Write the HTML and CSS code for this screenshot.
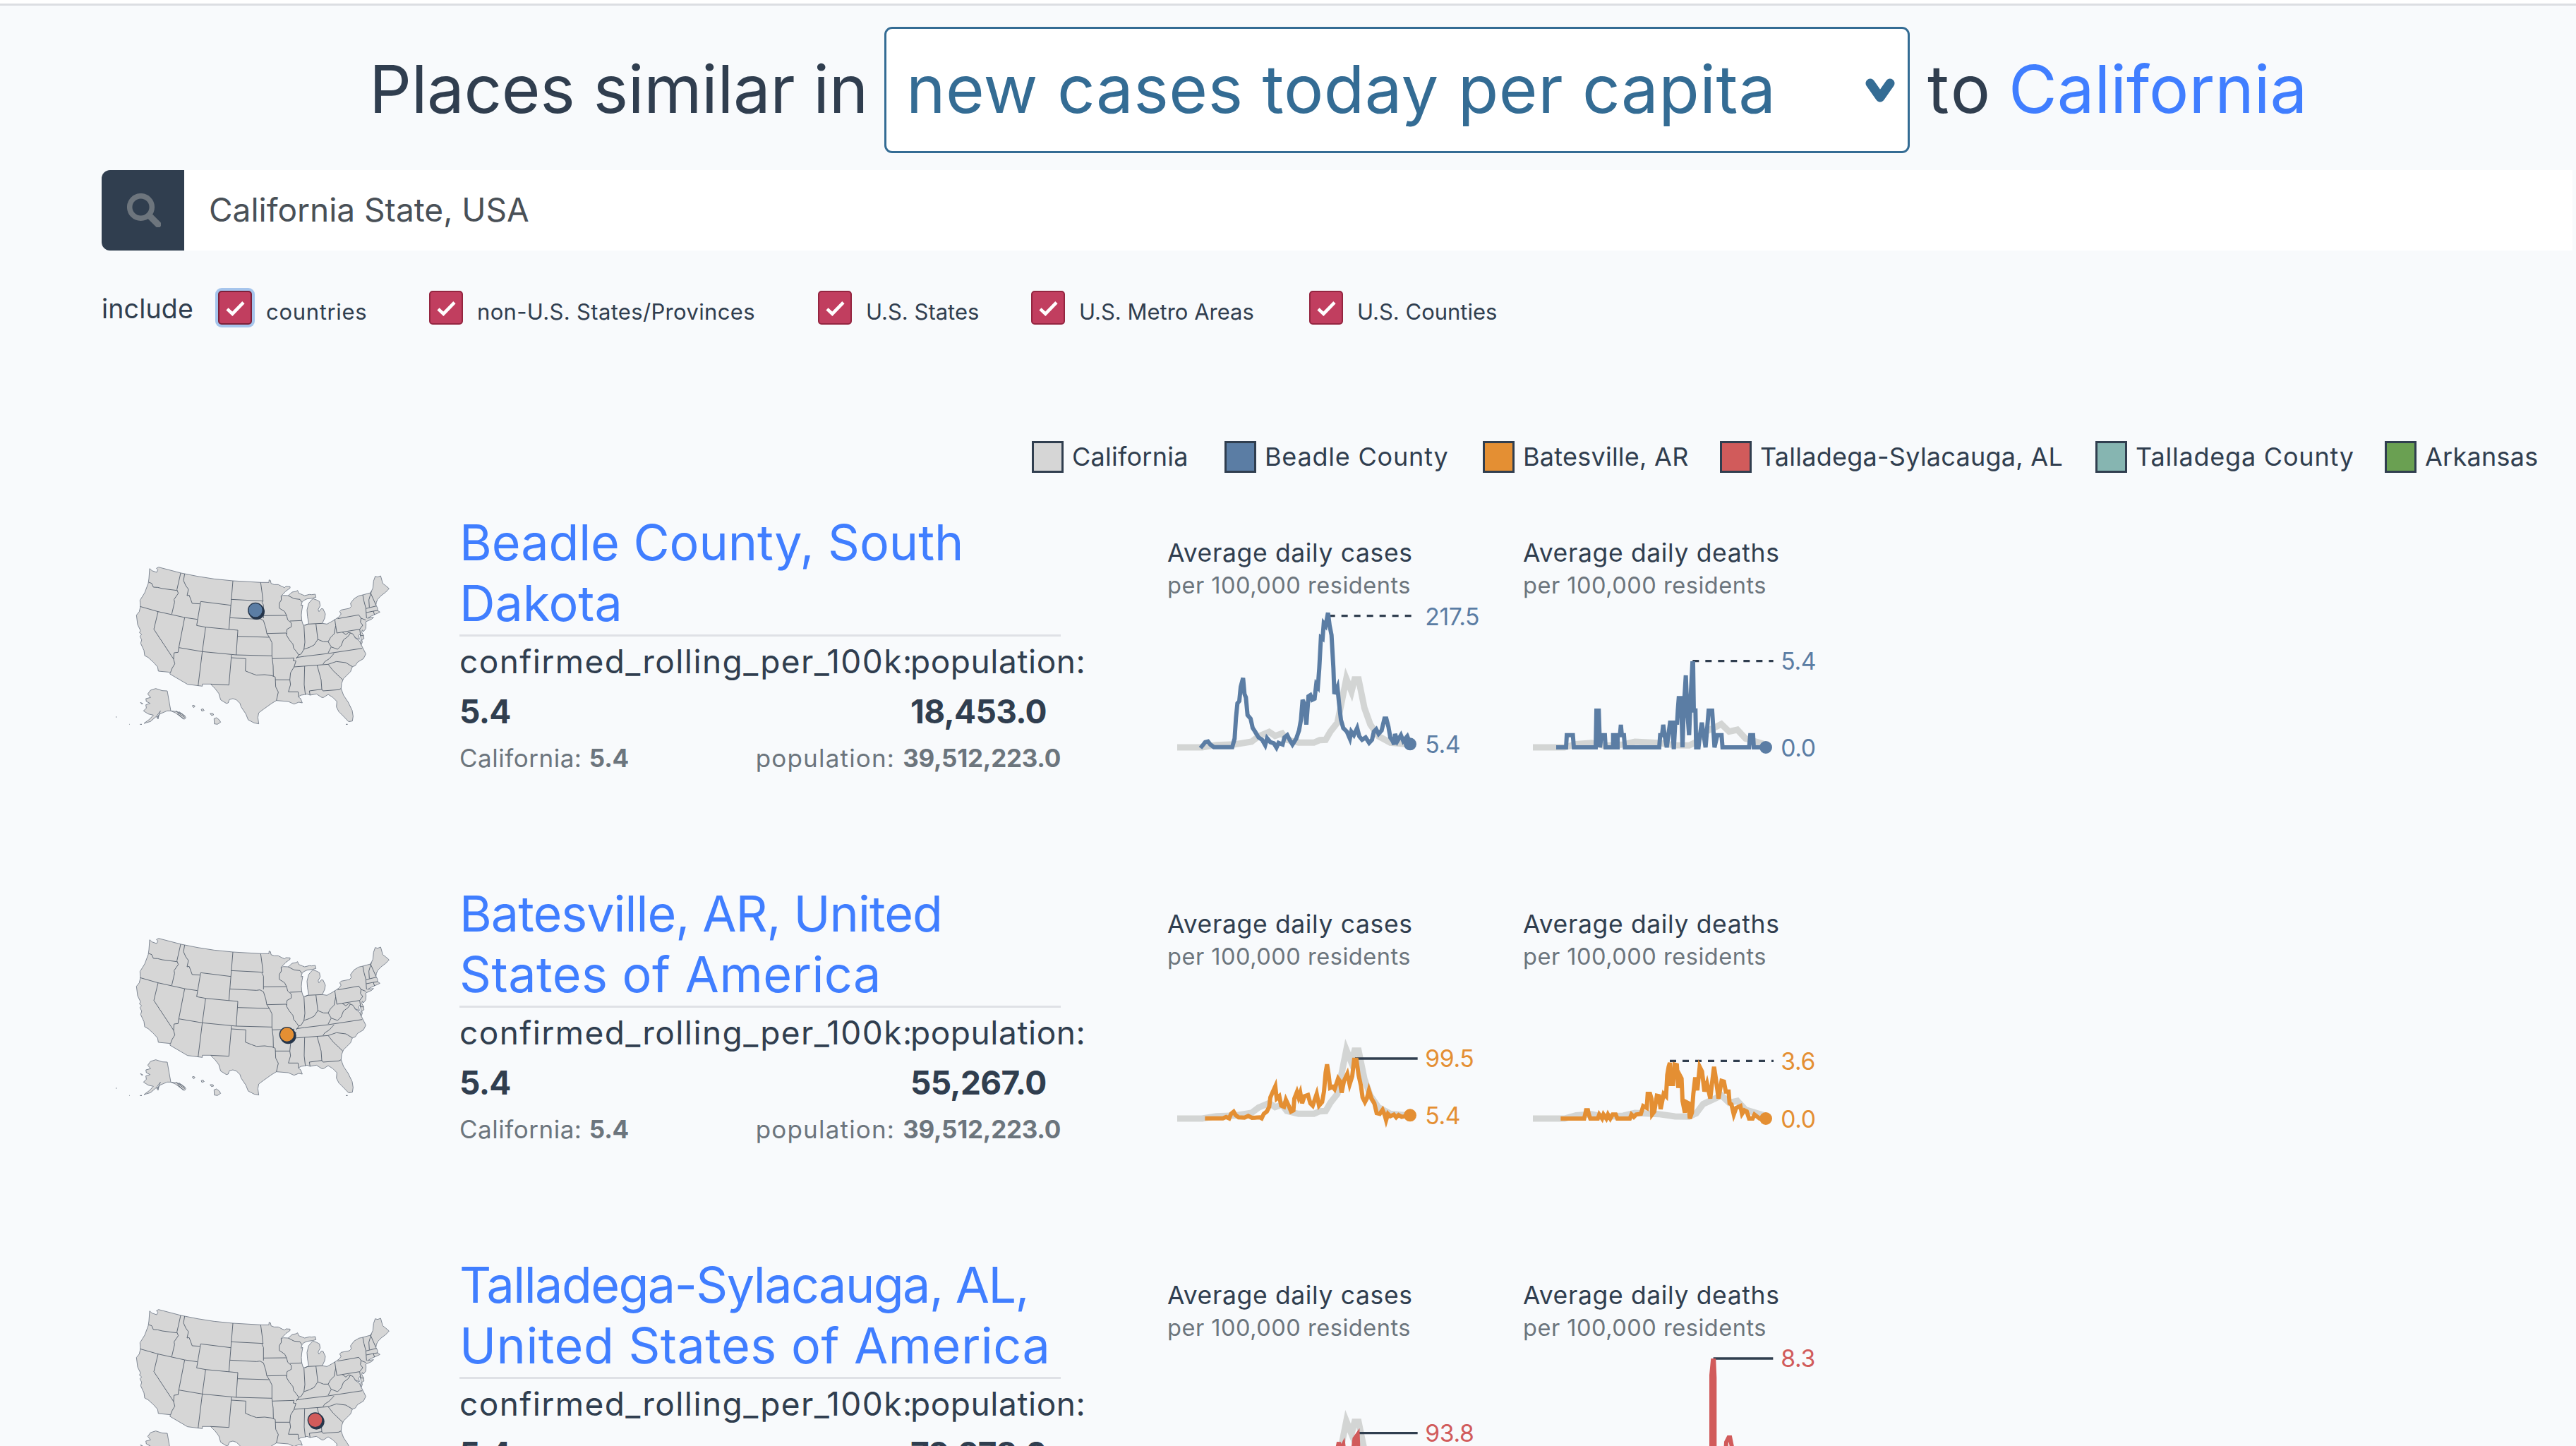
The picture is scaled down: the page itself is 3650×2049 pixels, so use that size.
FILE: index.html
```
<!DOCTYPE html>
<html lang="en">
<head>
<meta charset="utf-8">
<title>Places similar to California</title>
<link rel="stylesheet" href="styles.css">
</head>
<body>
<svg class="defs" aria-hidden="true">
  <defs>
    <g id="us-map">
      <path class="land" d="M246,107 L256,116 276,123 281,112 275,106 284,101 380,126 450,140 520,151 600,159 720,166 753,166 754,155 760,158 762,170 775,175 793,175 808,183 820,188 825,183 843,184 843,190 825,203 805,224 815,221 835,222 852,207 868,204 875,200 880,212 895,218 905,222 925,217 935,218 950,216 953,229 938,233 915,236 900,243 894,250 890,265 897,262 893,285 891,305 893,328 898,345 906,348 918,343 922,338 917,310 915,283 922,255 932,243 940,235 955,240 968,247 971,265 962,282 966,290 975,278 983,278 993,300 990,318 980,340 1000,343 1020,332 1035,323 1052,311 1060,300 1054,290 1060,283 1095,276 1103,268 1100,255 1115,235 1135,223 1152,219 1185,210 1189,203 1195,190 1198,160 1205,140 1215,143 1228,138 1237,170 1250,180 1264,192 1250,207 1230,222 1215,238 1210,250 1208,262 1215,275 1215,285 1225,292 1213,298 1208,300 1190,308 1172,318 1198,314 1190,322 1165,333 1166,345 1165,362 1155,375 1150,368 1148,378 1156,392 1157,405 1148,410 1150,420 1146,430 1142,425 1145,405 1140,385 1135,392 1138,408 1118,400 1138,415 1146,432 1153,446 1165,470 1155,490 1130,505 1120,520 1108,524 1100,545 1085,560 1070,575 1062,595 1060,617 1070,645 1090,675 1107,710 1111,735 1108,755 1092,758 1070,735 1050,715 1040,695 1042,672 1025,655 1005,642 985,655 978,655 955,640 928,645 915,640 905,643 890,645 878,652 888,660 895,678 880,675 860,683 835,672 785,668 765,680 730,705 710,720 706,740 710,767 690,763 665,750 655,725 635,695 630,680 615,665 600,660 585,664 580,678 572,680 548,665 540,638 525,618 505,598 470,598 470,607 407,599 332,555 335,548 283,543 280,525 262,505 240,485 225,477 222,455 208,425 212,410 205,395 212,387 203,380 207,370 195,345 190,305 202,290 207,268 205,242 225,210 240,170 243,150Z"/>
      <path class="border" d="M242,165 L255,170 262,186 280,187 300,192 362,200 M378,126 L362,197 368,212 350,238 352,250 340,301 M205,268 L282,290 395,315 449,323 M282,290 L264,365 348,492 M395,315 L370,443 367,463 350,465 348,492 353,512 342,530 335,548 M395,129 L390,158 400,180 411,195 405,222 414,220 427,255 460,257 M463,247 L591,263 M463,247 L446,349 484,356 621,369 M600,159 L583,366 M592,238 L728,245 M587,316 L700,322 715,320 730,328 M718,166 L724,210 728,245 724,250 730,262 730,318 M730,307 L828,306 M484,356 L470,460 452,606 M370,443 L470,460 614,474 766,478 M621,369 L614,474 M620,395 L755,399 M594,474 L583,602 505,598 M594,486 L655,490 653,542 680,553 700,560 735,558 765,562 780,568 M766,478 L771,520 772,565 M768,490 L860,487 856,498 868,500 860,525 845,550 842,580 845,600 836,631 877,631 880,652 M780,580 L842,580 M780,568 L782,610 793,632 785,668 M730,328 L740,360 744,383 755,399 766,422 766,478 M744,383 L825,381 830,386 M805,224 L806,240 797,255 797,275 820,290 828,306 833,325 848,338 848,355 830,365 828,390 840,410 855,428 858,445 870,460 880,474 870,490 M843,330 L893,328 M835,222 L860,235 885,238 893,250 M902,348 L906,420 902,450 890,470 880,474 M906,348 L918,343 980,340 M953,342 L961,408 945,432 925,442 902,450 M961,408 L985,418 1005,418 1015,400 1030,385 1037,350 1033,323 M1005,418 L1018,440 1005,465 M870,485 L905,480 1005,468 1150,446 M1018,440 L1045,450 1060,435 1070,410 1090,395 1100,380 M1037,350 L1042,381 1065,377 1139,365 M1065,377 L1080,388 1092,378 1110,385 1120,400 M1045,320 L1135,304 1145,318 1142,335 1152,348 1139,365 1143,392 1155,392 M1145,318 L1165,326 M1152,219 L1157,245 1165,275 1168,318 M1189,203 L1178,240 1180,272 M1185,210 L1208,262 M1165,277 L1210,266 M1167,294 L1197,288 1215,285 M1197,288 L1202,303 M860,525 L1005,514 1040,502 1080,507 1108,524 M1030,468 L1010,490 990,503 983,514 M905,522 L903,600 908,643 M958,518 L975,580 978,622 M925,627 L978,620 983,627 1050,622 1060,617 M925,627 L928,645 M1005,514 L1025,540 1067,580"/>
      <path class="land" d="M321,627 L300,626 272,617 250,624 238,640 250,655 230,660 232,672 248,680 230,686 232,700 220,712 240,725 262,730 245,748 222,765 250,757 275,735 292,712 280,740 290,725 320,712 336,712Z M336,712 L360,715 385,725 400,740 395,747 375,735 355,720Z M275,737 L285,733 282,747Z M207,676 l10,5 -3,3Z M427,690 l8,-2 4,5 -6,5Z M465,706 l8,-3 5,7 -10,3Z M503,723 l12,0 3,6 -9,2Z M520,745 l10,-4 12,9 6,10 -14,9 -13,-2Z"/>
      <path class="border" d="M358,712 L395,740 M365,722 L390,748 M370,715 L398,735 M102,738 h4 M205,769 h8 M1080,769 h8 M160,769 h2"/>
    </g>
    <path id="ref-cases" class="reference" d="M84,957 H190 L250,947 330,944 400,933 430,910 475,891 500,908 530,898 550,925 600,937 665,937 690,926 715,925 735,890 765,852 780,780 803,665 825,720 838,668 855,668 880,790 905,860 940,910 990,937 1075,945"/>
    <path id="ref-deaths" class="reference" d="M96,957 H230 L280,943 345,938 400,950 480,945 530,933 630,938 700,948 760,949 790,935 820,895 870,872 897,858 930,890 965,882 1000,920 1050,935 1085,945"/>
  </defs>
</svg>

<header class="headline">
  <span class="lead">Places similar in</span>
  <div class="select">
    <span>new cases today per capita</span>
    <svg class="chevron" viewBox="0 0 42 36"><path d="M7,7 L21,27 35,7"/></svg>
  </div>
  <span class="to">to</span>
  <a class="place">California</a>
</header>

<div class="search">
  <div class="search-button">
    <svg viewBox="0 0 48 48"><circle cx="19.500" cy="19.500" r="15.800"/><path class="handle" d="M32,32 L44,44"/></svg>
  </div>
  <div class="search-field">California State, USA</div>
</div>

<div class="filters">
  <span class="include">include</span>
  <label class="filter"><svg class="check focus" viewBox="0 0 48 48"><path d="M12,26 L20,33.500 37,16"/></svg><span class="wide">countries</span></label>
  <label class="filter"><svg class="check" viewBox="0 0 48 48"><path d="M12,26 L20,33.500 37,16"/></svg><span>non-U.S. States/Provinces</span></label>
  <label class="filter"><svg class="check" viewBox="0 0 48 48"><path d="M12,26 L20,33.500 37,16"/></svg><span class="tight">U.S. States</span></label>
  <label class="filter"><svg class="check" viewBox="0 0 48 48"><path d="M12,26 L20,33.500 37,16"/></svg><span class="tight">U.S. Metro Areas</span></label>
  <label class="filter"><svg class="check" viewBox="0 0 48 48"><path d="M12,26 L20,33.500 37,16"/></svg><span class="tight">U.S. Counties</span></label>
</div>

<div class="legend">
  <div class="key"><i class="swatch gray"></i>California</div>
  <div class="key wide"><i class="swatch blue"></i>Beadle County</div>
  <div class="key"><i class="swatch orange"></i>Batesville, AR</div>
  <div class="key"><i class="swatch red"></i>Talladega-Sylacauga, AL</div>
  <div class="key wide"><i class="swatch teal"></i>Talladega County</div>
  <div class="key"><i class="swatch green"></i>Arkansas</div>
</div>

<main>
  <section class="row blue-row">
    <svg class="map" viewBox="0 0 1350 840"><use href="#us-map"/><circle class="shadow" cx="701" cy="290" r="34"/><circle class="pin" cx="696" cy="284" r="31"/></svg>
    <div class="details">
      <h2>Beadle County, South<br>Dakota</h2>
      <div class="stats"><span>confirmed_rolling_per_100k:</span><span>population:</span><b>5.4</b><b>18,453.0</b></div>
      <div class="compare"><span>California: <b>5.4</b></span><span class="wider">population: <b>39,512,223.0</b></span></div>
    </div>
    <figure class="chart">
      <figcaption>Average daily cases<small>per 100,000 residents</small></figcaption>
      <svg viewBox="0 360 1500 720">
        <use href="#ref-cases"/>
        <path class="leader dashed" d="M728,398 H1083"/>
        <path class="series" d="M183,960 L195,945 203,935 215,932 225,945 240,956 318,956 328,920 334,830 340,770 348,760 354,700 364,662 370,730 376,745 383,820 396,835 405,875 415,890 430,915 445,925 458,948 466,918 480,935 495,940 506,958 515,938 532,945 540,915 552,905 562,925 574,945 590,920 602,885 610,840 617,755 625,775 633,860 642,740 650,735 658,755 668,750 675,690 682,700 688,620 695,490 702,495 707,430 715,440 725,385 732,440 740,480 748,620 752,730 765,700 772,770 780,840 790,875 805,890 818,920 824,890 835,905 849,875 858,910 870,925 885,915 900,938 912,925 920,890 930,880 940,900 953,885 965,835 973,835 982,870 990,915 1000,930 1006,945 1010,900 1020,930 1035,905 1045,930 1062,910 1070,930 1075,943"/>
        <circle class="end" cx="1074" cy="943" r="27"/>
        <text x="1138" y="437">217.5</text><text x="1138" y="980">5.4</text>
      </svg>
    </figure>
    <figure class="chart second">
      <figcaption>Average daily deaths<small>per 100,000 residents</small></figcaption>
      <svg viewBox="0 360 1500 720">
        <use href="#ref-deaths"/>
        <path class="leader dashed" d="M775,590 H1118"/>
        <path class="series" d="M195,957 H237 L240,905 H266 L270,957 H363 L366,801 H376 L381,957 L388,905 H402 L405,957 H437 V905 H447 V957 H456 V905 H466 L470,861 474,905 483,905 487,957 H633 L637,905 645,905 650,861 656,905 665,957 672,905 679,852 688,852 695,965 701,852 709,852 712,800 716,748 726,748 732,957 737,800 746,651 752,800 760,905 767,740 774,600 777,600 780,800 787,800 790,957 800,957 806,905 814,852 822,905 830,957 843,801 858,801 868,957 880,905 898,905 902,957 H1015 L1020,905 1032,905 1035,957 1085,957"/>
        <circle class="end" cx="1086" cy="957" r="27"/>
        <text x="1150" y="627">5.4</text><text x="1150" y="995">0.0</text>
      </svg>
    </figure>
  </section>

  <section class="row orange-row">
    <svg class="map" viewBox="0 0 1350 840"><use href="#us-map"/><circle class="shadow" cx="835" cy="516" r="34"/><circle class="pin" cx="830" cy="510" r="31"/></svg>
    <div class="details">
      <h2><span class="tighter">Batesville, AR, United</span><br><span class="wide">States of America</span></h2>
      <div class="stats"><span>confirmed_rolling_per_100k:</span><span>population:</span><b>5.4</b><b>55,267.0</b></div>
      <div class="compare"><span>California: <b>5.4</b></span><span class="wider">population: <b>39,512,223.0</b></span></div>
    </div>
    <figure class="chart">
      <figcaption>Average daily cases<small>per 100,000 residents</small></figcaption>
      <svg viewBox="0 360 1500 720">
        <use href="#ref-cases"/>
        <g transform="translate(60 582)">
          <path class="leader" d="M780,120 H1046"/>
          <path class="series" d="M142,374 H218 L232,368 245,374 253,355 264,346 272,360 285,370 310,371 326,364 342,372 375,370 383,374 392,355 405,345 415,325 420,285 430,262 441,238 447,290 458,280 466,320 478,325 486,295 500,325 508,345 518,340 522,290 533,262 540,285 547,265 555,310 565,280 580,275 590,310 600,320 617,270 627,320 640,305 648,260 655,180 661,145 668,190 674,245 685,240 693,250 708,205 715,215 723,265 733,215 747,185 757,230 768,195 776,125 786,125 795,190 805,235 812,285 822,305 830,290 839,255 850,290 862,310 872,352 885,355 897,338 906,360 912,382 920,355 930,365 945,358 955,370 965,360 978,368 1014,361"/>
          <circle class="end" cx="1014" cy="361" r="27"/>
        </g>
        <text x="1138" y="738">99.5</text><text x="1138" y="980">5.4</text>
      </svg>
    </figure>
    <figure class="chart second">
      <figcaption>Average daily deaths<small>per 100,000 residents</small></figcaption>
      <svg viewBox="0 360 1500 720">
        <use href="#ref-deaths"/>
        <g transform="translate(60 582)">
          <path class="leader dashed" d="M618,130 H1059"/>
          <path class="series" d="M154,375 H254 L258,358 262,340 270,340 274,358 280,375 H312 L318,358 330,375 336,358 348,375 355,358 365,375 375,358 388,358 395,375 H448 L455,358 465,368 475,358 495,355 505,322 520,330 524,270 534,270 540,290 543,357 552,345 563,278 572,280 579,335 588,290 592,270 602,280 607,190 613,155 618,138 622,228 632,228 638,145 648,148 654,245 660,190 668,205 672,300 682,350 688,305 698,310 703,375 712,350 718,270 726,200 735,255 745,155 755,175 765,260 776,225 790,290 798,220 806,155 813,200 825,290 838,215 848,218 856,260 868,260 872,310 880,315 890,358 900,330 918,322 925,355 935,340 945,345 955,375 970,375 978,358 1000,375 1026,375"/>
          <circle class="end" cx="1026" cy="375" r="27"/>
        </g>
        <text x="1150" y="749">3.6</text><text x="1150" y="995">0.0</text>
      </svg>
    </figure>
  </section>

  <section class="row red-row">
    <svg class="map" viewBox="0 0 1350 840"><use href="#us-map"/><circle class="shadow" cx="955" cy="577" r="34"/><circle class="pin" cx="950" cy="571" r="31"/></svg>
    <div class="details">
      <h2><span class="tightest">Talladega-Sylacauga, AL,</span><br><span class="wide">United States of America</span></h2>
      <div class="stats"><span>confirmed_rolling_per_100k:</span><span>population:</span><b>5.4</b><b>79,978.0</b></div>
    </div>
    <figure class="chart">
      <figcaption>Average daily cases<small>per 100,000 residents</small></figcaption>
      <svg viewBox="0 360 1500 720">
        <use href="#ref-cases"/>
        <path class="leader" d="M850,716 H1106"/>
        <path class="series" d="M750,870 L762,800 771,755 777,790 790,765 800,850 825,850 838,740 851,722 856,850 870,900"/>
        <text x="1138" y="752">93.8</text>
      </svg>
    </figure>
    <figure class="chart second">
      <figcaption>Average daily deaths<small>per 100,000 residents</small></figcaption>
      <svg viewBox="0 360 1500 720">
        <use href="#ref-deaths"/>
        <path class="leader" d="M863,399 H1117"/>
        <path class="series" d="M855,957 V470 L861,408 865,408 868,480 V957 M905,957 L918,755 928,735 934,735 945,790 960,957"/>
        <text x="1150" y="436">8.3</text>
      </svg>
    </figure>
  </section>
</main>
</body>
</html>
```
FILE: styles.css
```
* { box-sizing: border-box; }
body {
  margin: 0;
  height: 2049px;
  overflow: hidden;
  background: #f8fafc;
  border-top: 5px solid #fff;
  color: #303e4f;
  font-family: Inter, "Open Sans", sans-serif;
  font-weight: 400;
  font-feature-settings: "calt" 0;
  white-space: nowrap;
}
.defs { display: block; width: 0; height: 0; }

.headline {
  display: flex;
  height: 212px;
  padding: 30px 0 0 523px;
  border-top: 3px solid #dcdee2;
  font-size: 94px;
  line-height: 176px;
  letter-spacing: -.004em;
}
.lead { width: 730px; }
.select {
  display: flex;
  align-items: center;
  justify-content: space-between;
  width: 1453px;
  height: 179px;
  padding: 0 18px 3px 28px;
  border: 3px solid #346c94;
  border-radius: 11px;
  background: #fff;
  color: #346c94;
  letter-spacing: .005em;
}
.chevron { width: 42px; height: 36px; margin-top: 6px; fill: none; stroke: #346c94; stroke-width: 13; stroke-linecap: round; stroke-linejoin: round; }
.to { width: 115px; margin-left: 25px; letter-spacing: .03em; }
.place { letter-spacing: 0; }
.place, h2 { color: #407eff; }

.search { display: flex; width: 3501px; height: 114px; margin: 24px 0 0 144px; }
.search-button { display: flex; width: 117px; padding: 33px 0 0 36px; border-radius: 12px 0 0 12px; background: #303e4f; }
.search-button svg { width: 48px; height: 48px; fill: none; stroke: #6d757d; stroke-width: 7.500; }
.search-button .handle { stroke-width: 9; stroke-linecap: round; }
.search-field { flex: 1; padding-left: 35px; background: #fff; color: #495057; font-size: 46px; line-height: 112px; }

.filters {
  display: grid;
  grid-template-columns: 165px 299px 551px 302px 394px auto;
  justify-content: start;
  align-items: center;
  height: 60px;
  margin: 51px 0 0 144px;
}
.include { padding-top: 2px; font-size: 37.500px; letter-spacing: .005em; }
.filter { display: flex; align-items: center; gap: 20px; font-size: 31px; letter-spacing: .011em; }
.filter span { padding-top: 10px; }
.check { width: 48px; height: 48px; border: 2px solid #942540; border-radius: 5px; background: #c13e5f; fill: none; stroke: #fff; stroke-width: 5; }
.focus { border-color: #7c2039; box-shadow: 0 0 0 4px #a6c5ec; }

.legend {
  display: grid;
  grid-template-columns: 273px 366px 336px 532px 410px auto;
  justify-content: start;
  height: 45px;
  margin: 159px 0 0 1462px;
  font-size: 36px;
  line-height: 44px;
  letter-spacing: .007em;
}
.key { display: flex; gap: 12px; }
.swatch { width: 45px; height: 45px; border: 3px solid #303e4f; }
.gray { background: #d6d6d6; }
.blue { background: #5b7da4; }
.orange { background: #e48f33; }
.red { background: #d15b5b; }
.teal { background: #86b5b1; }
.green { background: #6aa052; }

main { height: 1349px; margin-top: 30px; overflow: hidden; }
.row { display: grid; grid-template-columns: 521px 989px 500px 500px; height: 526px; padding-left: 130px; }
.blue-row { --accent: #5b7da4; }
.orange-row { --accent: #e48f33; }
.red-row { --accent: #d15b5b; }

.map { width: 450px; height: 280px; margin-top: 70px; }
.land { fill: #d6d6d6; stroke: #6b7583; stroke-width: 2.500; stroke-linejoin: round; }
.border { fill: none; stroke: #56616f; stroke-width: 2.800; }
.shadow { fill: #26364b; }
.pin { fill: var(--accent); stroke: #26364b; stroke-width: 4; }

.details { width: 852px; padding-top: 26px; }
h2 { margin: 0; padding-bottom: 1px; border-bottom: 3px solid #dfe1e6; font-size: 70px; font-weight: 400; line-height: 86px; letter-spacing: -.001em; }
b { font-weight: 650; }
.stats { display: grid; grid-template-columns: 639px auto; grid-template-rows: 71px 72px; justify-content: start; font-size: 46px; line-height: 71px; letter-spacing: .031em; }
.stats span + span { letter-spacing: .012em; }
.stats b { letter-spacing: -.015em; }
.compare { display: flex; justify-content: space-between; color: #6c757d; font-size: 35px; line-height: 58px; letter-spacing: .015em; }

.chart { margin: 61px 0 0; }
figcaption { padding-left: 14px; font-size: 35.500px; line-height: 46px; letter-spacing: .018em; }
.second figcaption { padding-left: 18px; }
small { display: block; color: #6c757d; font-size: 32.500px; letter-spacing: .016em; }
.chart svg { display: block; width: 500px; height: 240px; margin-top: 7px; overflow: visible; font-size: 101px; letter-spacing: -.012em; }
.chart text { fill: var(--accent); }
.reference { fill: none; stroke: #d3d5d4; stroke-width: 27; }
.series { fill: none; stroke: var(--accent); stroke-width: 18; stroke-linejoin: miter; stroke-miterlimit: 4; }
.end { fill: var(--accent); }
.leader { stroke: #303e4f; stroke-width: 10; }
.dashed { stroke-dasharray: 27 27; }

.tightest { letter-spacing: -.022em; }
.tighter { letter-spacing: -.014em; }
.tight { letter-spacing: 0; }
.wide { letter-spacing: .022em; }
h2 .wide { letter-spacing: .007em; }
.wider { letter-spacing: .034em; }
.compare b { letter-spacing: -.008em; }
```
